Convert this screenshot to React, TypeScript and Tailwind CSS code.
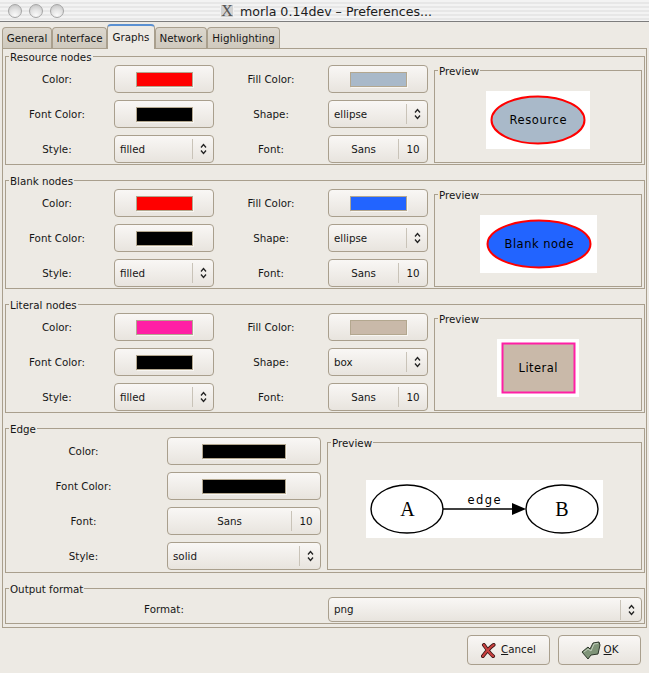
import React from "react";

const LINE = "border-[#a99f8d]";
const BG = "bg-[#edeae4]";
const BTN = "bg-gradient-to-b from-[#f9f7f5] to-[#e8e4de] border border-[#a99f8d] rounded-[4px]";

function Updown() {
  return (
    <svg width="7" height="12" viewBox="0 0 7 12" fill="none" stroke="#222" strokeWidth="1.3">
      <path d="M1 4.5 L3.5 1.5 L6 4.5" />
      <path d="M1 7.5 L3.5 10.5 L6 7.5" />
    </svg>
  );
}

function Label({ children, mt = "mt-[2px]" }: { children: React.ReactNode; mt?: string }) {
  return (
    <div className="flex items-center justify-center">
      <span className={mt}>{children}</span>
    </div>
  );
}

function ColorBtn({ color, wide, h = "h-[28px]" }: { color: string; wide?: boolean; h?: string }) {
  return (
    <div className={`${BTN} ${h} flex items-center justify-center`}>
      <div
        className={`${wide ? "w-[84px]" : "w-[57px]"} h-[15px] border border-[#b3a78f] shadow-[1px_1px_0_#f8f6f2]`}
        style={{ background: color }}
      />
    </div>
  );
}

function SelectBtn({ text, h = "h-[28px]", mt = "mt-[2px]" }: { text: string; h?: string; mt?: string }) {
  return (
    <div className={`${BTN} ${h} flex items-center pl-[5px]`}>
      <span className={`flex-1 ${mt}`}>{text}</span>
      <div className="h-[20px] border-l border-[#c9c3b8] w-[21px] flex items-center justify-center">
        <Updown />
      </div>
    </div>
  );
}

function FontBtn() {
  return (
    <div className={`${BTN} h-[28px] flex items-center`}>
      <span className="flex-1 text-center mt-[2px]">Sans</span>
      <div className="h-[20px] border-l border-[#c9c3b8] w-[29px] flex items-center justify-center">
        <span className="mt-[2px]">10</span>
      </div>
    </div>
  );
}

function Frame({ title, className, children }: { title: string; className?: string; children: React.ReactNode }) {
  return (
    <div className={`relative border ${LINE} ${className ?? ""}`}>
      <div className={`absolute left-[3px] top-[-7px] ${BG} px-px leading-[14px]`}>{title}</div>
      {children}
    </div>
  );
}

function Section({
  title,
  color,
  fill,
  fontColor,
  shape,
  preview,
  imgClass,
}: {
  title: string;
  color: string;
  fill: string;
  fontColor: string;
  shape: string;
  preview: React.ReactNode;
  imgClass: string;
}) {
  return (
    <Frame title={title} className="h-[109px] pt-[8px] pl-0 pr-[2px]">
      <div className="grid grid-cols-[102px_100px_102px_100px_208px] grid-rows-[28px_28px_28px] gap-x-[6px] gap-y-[7px]">
        <Label>Color:</Label>
        <ColorBtn color={color} />
        <Label>Fill Color:</Label>
        <ColorBtn color={fill} />
        <Frame title="Preview" className="row-span-3 mt-[5px] h-[93px]">
          <div className="flex justify-center pt-[20px]">
            <div className={`${imgClass} h-[58px] bg-white`}>{preview}</div>
          </div>
        </Frame>
        <Label>Font Color:</Label>
        <ColorBtn color={fontColor} />
        <Label>Shape:</Label>
        <SelectBtn text={shape} />
        <Label>Style:</Label>
        <SelectBtn text="filled" />
        <Label>Font:</Label>
        <FontBtn />
      </div>
    </Frame>
  );
}

const F = "'DejaVu Sans', sans-serif";

function Svg({ w, children }: { w: number; children: React.ReactNode }) {
  return (
    <svg width={w} height={58} viewBox={`0 0 ${w} 58`} className="block">
      {children}
    </svg>
  );
}

const tabs = [
  { t: "General", w: "w-[50px]" },
  { t: "Interface", w: "w-[55px]" },
  { t: "Graphs", w: "w-[48px]", active: true },
  { t: "Network", w: "w-[52px]" },
  { t: "Highlighting", w: "w-[73px]" },
];

export default function App() {
  return (
    <div className={`w-[649px] h-[673px] ${BG} overflow-hidden text-[10.3px] text-[#161616] font-['DejaVu_Sans',sans-serif]`}>
      {/* title bar */}
      <div className="relative h-[22px] border-b border-[#7d7d7d] bg-[repeating-linear-gradient(to_bottom,#f3f3f3_0px,#f3f3f3_2px,#e7e7e7_2px,#e7e7e7_4px)] flex items-center pl-[8px] gap-[7px]">
        {[0, 1, 2].map((i) => (
          <div
            key={i}
            className="w-[14px] h-[14px] rounded-full border border-[#a5a5a5] bg-[radial-gradient(circle_at_50%_85%,#fafafa_0%,#e2e2e2_50%,#bdbdbd_100%)]"
          />
        ))}
        <div className="absolute left-[220px] top-[4px] w-[14px] h-[14px] bg-[#d2d2d2] border border-[#f0f0f0] flex items-center justify-center font-['Liberation_Serif',serif] text-[16px] leading-none text-[#555]">
          X
        </div>
        <div className="absolute left-[240px] top-[4px] text-[12.6px] leading-[16px] text-[#1c1c1c] whitespace-nowrap">
          morla 0.14dev – Preferences...
        </div>
      </div>

      {/* tabs */}
      <div className="h-[26px] pl-[2px] flex items-end relative z-10">
        {tabs.map((x) =>
          x.active ? (
            <div
              key={x.t}
              className={`${x.w} h-[25px] -mb-px ${BG} border-x border-t-[2px] ${LINE} border-t-[#5a90d2] rounded-t-[4px] flex items-center justify-center`}
            >
              {x.t}
            </div>
          ) : (
            <div
              key={x.t}
              className={`${x.w} h-[21px] bg-gradient-to-b from-[#dcd7ce] to-[#cfc9bd] border-x border-t ${LINE} rounded-t-[4px] flex items-center justify-center`}
            >
              <span className="mt-[2px]">{x.t}</span>
            </div>
          ),
        )}
      </div>

      {/* pane */}
      <div className={`mx-[2px] h-[580px] border ${LINE} pt-[7px] pl-[2px] pr-px flex flex-col gap-[15px]`}>
        <Section
          title="Resource nodes"
          color="#ff0000"
          fill="#a9b9c9"
          fontColor="#000000"
          shape="ellipse"
          imgClass="w-[104px]"
          preview={
            <Svg w={104}>
              <ellipse cx="52" cy="29" rx="46.5" ry="23.5" fill="#a9b9c9" stroke="#ff0000" strokeWidth="2" />
              <text x="52" y="33" textAnchor="middle" fontFamily={F} fontSize="11.5" fill="#000" textLength="57">
                Resource
              </text>
            </Svg>
          }
        />
        <Section
          title="Blank nodes"
          color="#ff0000"
          fill="#2264ff"
          fontColor="#000000"
          shape="ellipse"
          imgClass="w-[117px]"
          preview={
            <Svg w={117}>
              <ellipse cx="59" cy="29" rx="51.5" ry="23.5" fill="#2264ff" stroke="#ff0000" strokeWidth="2" />
              <text x="59" y="33" textAnchor="middle" fontFamily={F} fontSize="11.5" fill="#000" textLength="69">
                Blank node
              </text>
            </Svg>
          }
        />
        <Section
          title="Literal nodes"
          color="#ff1fa5"
          fill="#c9b9a9"
          fontColor="#000000"
          shape="box"
          imgClass="w-[82px]"
          preview={
            <Svg w={82}>
              <rect x="5.5" y="4.5" width="72" height="49" fill="#c9b9a9" stroke="#ff1fa5" strokeWidth="2" />
              <text x="41" y="33" textAnchor="middle" fontFamily={F} fontSize="11.5" fill="#000" textLength="39">
                Literal
              </text>
            </Svg>
          }
        />

        <Frame title="Edge" className="h-[145px] pt-[8px] pr-[2px]">
          <div className="grid grid-cols-[155px_154px_315px] grid-rows-[28px_28px_28px_28px] gap-x-[6px] gap-y-[7px]">
            <Label>Color:</Label>
            <ColorBtn color="#000000" wide />
            <Frame title="Preview" className="row-span-4 mt-[5px] h-[128px]">
              <div className="flex justify-center pt-[37px]">
                <div className="w-[237px] h-[58px] bg-white">
                  <Svg w={237}>
                    <ellipse cx="41" cy="29" rx="36" ry="24" fill="#fff" stroke="#000" strokeWidth="1.4" />
                    <ellipse cx="196" cy="29" rx="36" ry="24" fill="#fff" stroke="#000" strokeWidth="1.4" />
                    <path d="M77 29 L147 29" stroke="#000" strokeWidth="1.4" />
                    <path d="M146 23 L160 29 L146 35 Z" fill="#000" />
                    <text x="118" y="24" textAnchor="middle" fontFamily={F} fontSize="11.5" fill="#000" textLength="33">
                      edge
                    </text>
                    <text x="41.5" y="36" textAnchor="middle" fontFamily="'Liberation Serif', serif" fontSize="20" fill="#000">
                      A
                    </text>
                    <text x="196" y="36" textAnchor="middle" fontFamily="'Liberation Serif', serif" fontSize="20" fill="#000">
                      B
                    </text>
                  </Svg>
                </div>
              </div>
            </Frame>
            <Label>Font Color:</Label>
            <ColorBtn color="#000000" wide />
            <Label>Font:</Label>
            <FontBtn />
            <Label>Style:</Label>
            <SelectBtn text="solid" />
          </div>
        </Frame>

        <Frame title="Output format" className="h-[36px] pt-[8px]">
          <div className="grid grid-cols-[316px_314px] gap-x-[6px] h-[25px]">
            <Label mt="mt-0">Format:</Label>
            <SelectBtn text="png" h="h-[25px]" mt="mt-0" />
          </div>
        </Frame>
      </div>

      {/* action buttons */}
      <div className="flex justify-end gap-[8px] pr-[8px] pt-[7px]">
        <div className={`${BTN} w-[83px] h-[30px] flex items-center justify-center gap-[5px]`}>
          <svg width="15" height="15" viewBox="0 0 16 16" fill="none" strokeLinecap="round">
            <path d="M3 2 C6 6 9 11 13 14 M13.5 2 C9 5 5 10 2 14" stroke="#3a1616" strokeWidth="4" />
            <path d="M3 2 C6 6 9 11 13 14 M13.5 2 C9 5 5 10 2 14" stroke="#c9403f" strokeWidth="2.2" />
          </svg>
          <span>
            <span className="underline">C</span>ancel
          </span>
        </div>
        <div className={`${BTN} w-[83px] h-[30px] flex items-center justify-center gap-[3px]`}>
          <svg width="20" height="19" viewBox="0 0 20 19">
            <path d="M1 11 L7 6 L9 8 L12 2 L18 1 L19 4 L17 13 L10 14 L7 18 Z" fill="#7f9478" stroke="#2c362a" strokeWidth="1" strokeLinejoin="round" />
            <path d="M3 11 L7 8 L10 10 L13 3 L17 2.5" fill="none" stroke="#c3d0bd" strokeWidth="1" />
          </svg>
          <span>
            <span className="underline">O</span>K
          </span>
        </div>
      </div>
    </div>
  );
}
